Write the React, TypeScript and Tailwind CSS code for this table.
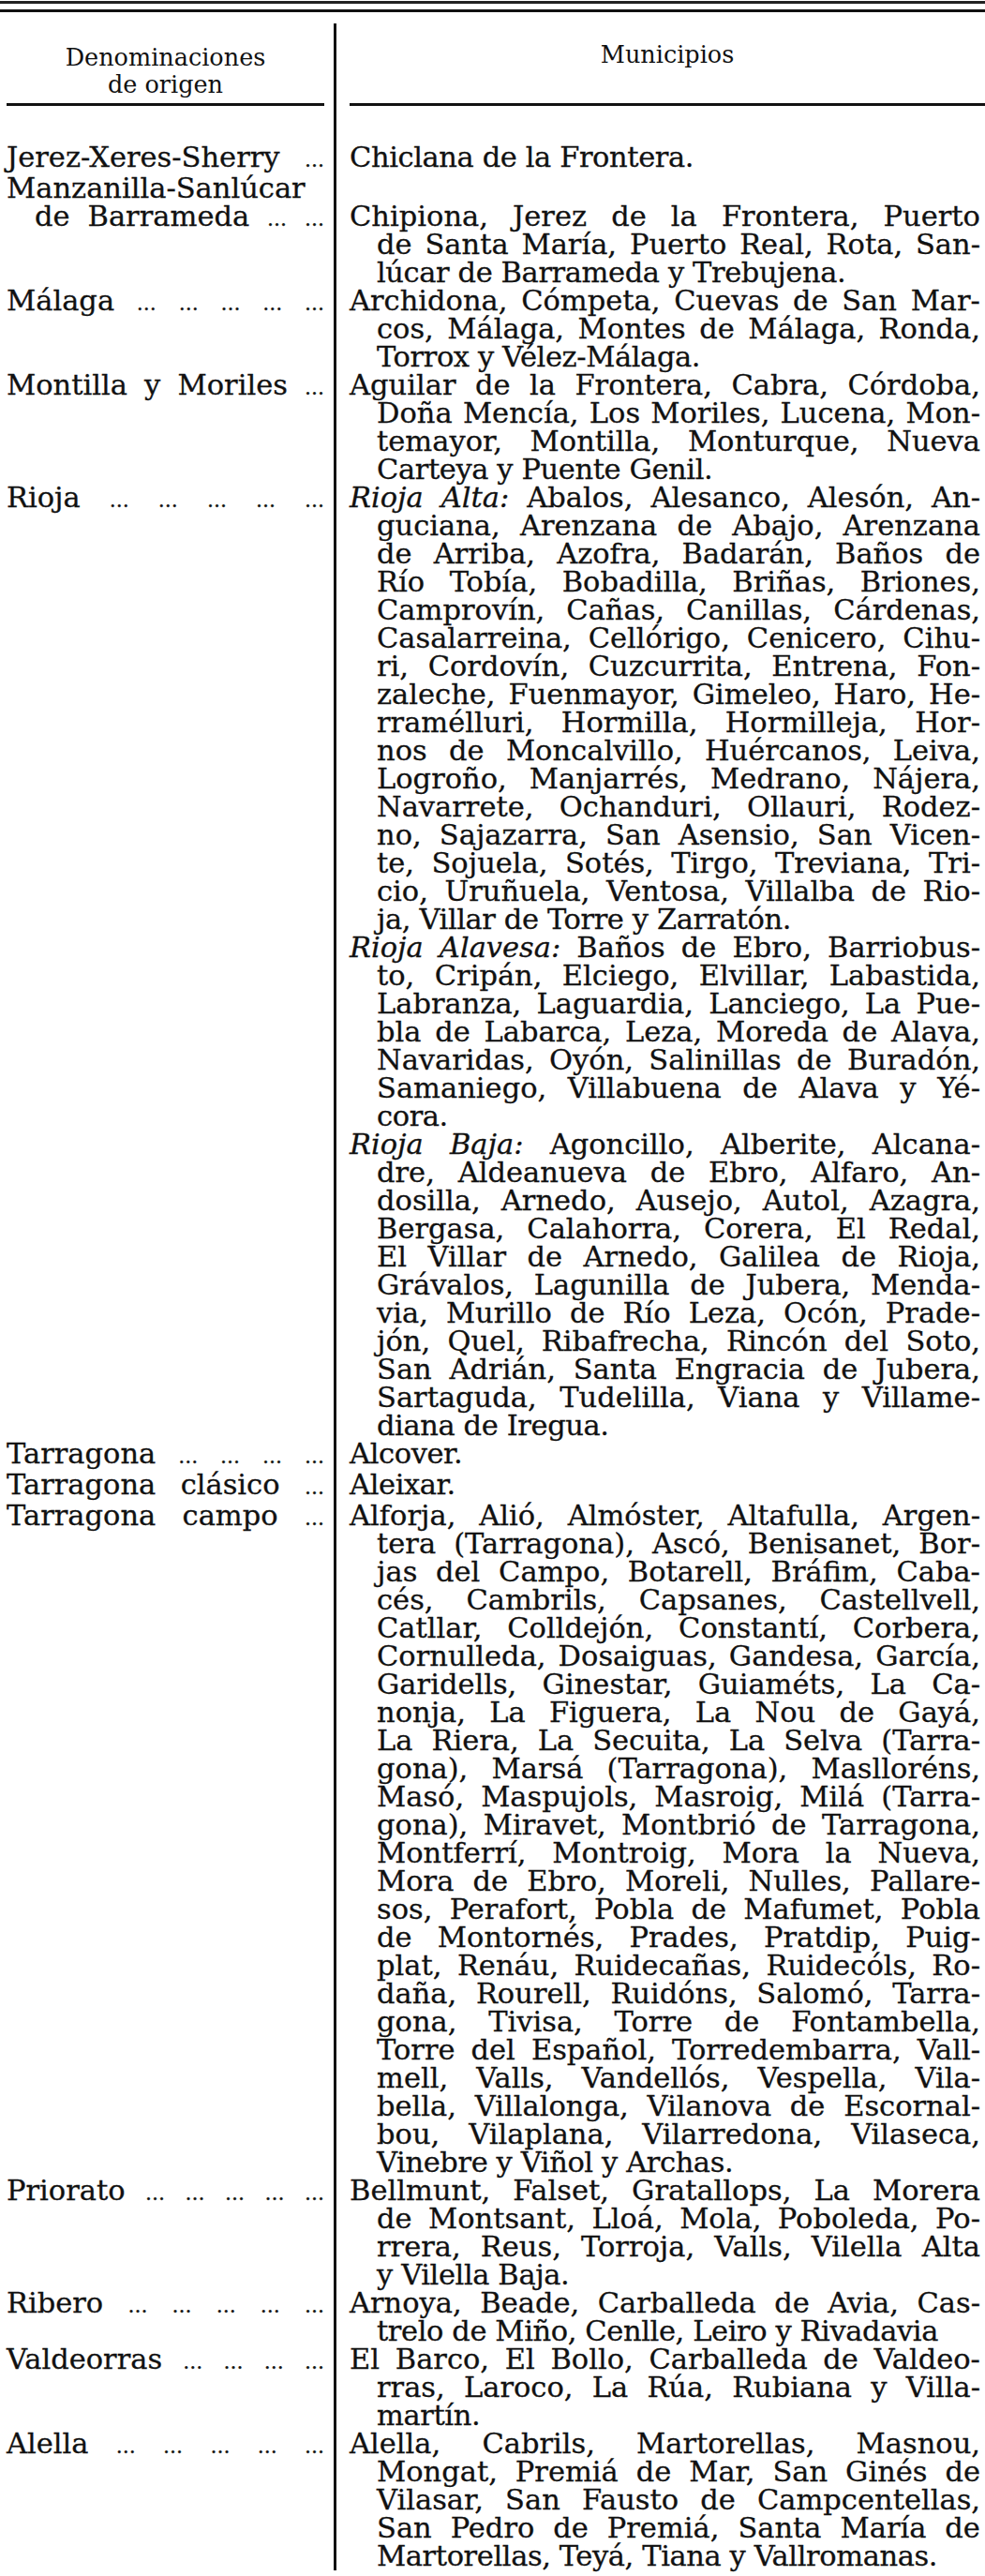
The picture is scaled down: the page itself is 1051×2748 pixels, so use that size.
type Label = { text: string; indent?: boolean }
type Entry = { label: Label[]; skip?: number; paras: string[][] }

const entries: Entry[] = [
  {
    label: [{ text: 'Jerez-Xeres-Sherry ...' }],
    paras: [['Chiclana de la Frontera.']],
  },
  {
    label: [{ text: 'Manzanilla-Sanlúcar' }, { text: 'de Barrameda ... ...', indent: true }],
    skip: 1,
    paras: [
      [
        'Chipiona, Jerez de la Frontera, Puerto',
        'de Santa María, Puerto Real, Rota, San-',
        'lúcar de Barrameda y Trebujena.',
      ],
    ],
  },
  {
    label: [{ text: 'Málaga ... ... ... ... ...' }],
    paras: [
      [
        'Archidona, Cómpeta, Cuevas de San Mar-',
        'cos, Málaga, Montes de Málaga, Ronda,',
        'Torrox y Vélez-Málaga.',
      ],
    ],
  },
  {
    label: [{ text: 'Montilla y Moriles ...' }],
    paras: [
      [
        'Aguilar de la Frontera, Cabra, Córdoba,',
        'Doña Mencía, Los Moriles, Lucena, Mon-',
        'temayor, Montilla, Monturque, Nueva',
        'Carteya y Puente Genil.',
      ],
    ],
  },
  {
    label: [{ text: 'Rioja ... ... ... ... ...' }],
    paras: [
      [
        '_Rioja_ _Alta:_ Abalos, Alesanco, Alesón, An-',
        'guciana, Arenzana de Abajo, Arenzana',
        'de Arriba, Azofra, Badarán, Baños de',
        'Río Tobía, Bobadilla, Briñas, Briones,',
        'Camprovín, Cañas, Canillas, Cárdenas,',
        'Casalarreina, Cellórigo, Cenicero, Cihu-',
        'ri, Cordovín, Cuzcurrita, Entrena, Fon-',
        'zaleche, Fuenmayor, Gimeleo, Haro, He-',
        'rramélluri, Hormilla, Hormilleja, Hor-',
        'nos de Moncalvillo, Huércanos, Leiva,',
        'Logroño, Manjarrés, Medrano, Nájera,',
        'Navarrete, Ochanduri, Ollauri, Rodez-',
        'no, Sajazarra, San Asensio, San Vicen-',
        'te, Sojuela, Sotés, Tirgo, Treviana, Tri-',
        'cio, Uruñuela, Ventosa, Villalba de Rio-',
        'ja, Villar de Torre y Zarratón.',
      ],
      [
        '_Rioja_ _Alavesa:_ Baños de Ebro, Barriobus-',
        'to, Cripán, Elciego, Elvillar, Labastida,',
        'Labranza, Laguardia, Lanciego, La Pue-',
        'bla de Labarca, Leza, Moreda de Alava,',
        'Navaridas, Oyón, Salinillas de Buradón,',
        'Samaniego, Villabuena de Alava y Yé-',
        'cora.',
      ],
      [
        '_Rioja_ _Baja:_ Agoncillo, Alberite, Alcana-',
        'dre, Aldeanueva de Ebro, Alfaro, An-',
        'dosilla, Arnedo, Ausejo, Autol, Azagra,',
        'Bergasa, Calahorra, Corera, El Redal,',
        'El Villar de Arnedo, Galilea de Rioja,',
        'Grávalos, Lagunilla de Jubera, Menda-',
        'via, Murillo de Río Leza, Ocón, Prade-',
        'jón, Quel, Ribafrecha, Rincón del Soto,',
        'San Adrián, Santa Engracia de Jubera,',
        'Sartaguda, Tudelilla, Viana y Villame-',
        'diana de Iregua.',
      ],
    ],
  },
  {
    label: [{ text: 'Tarragona ... ... ... ...' }],
    paras: [['Alcover.']],
  },
  {
    label: [{ text: 'Tarragona clásico ...' }],
    paras: [['Aleixar.']],
  },
  {
    label: [{ text: 'Tarragona campo ...' }],
    paras: [
      [
        'Alforja, Alió, Almóster, Altafulla, Argen-',
        'tera (Tarragona), Ascó, Benisanet, Bor-',
        'jas del Campo, Botarell, Bráfim, Caba-',
        'cés, Cambrils, Capsanes, Castellvell,',
        'Catllar, Colldejón, Constantí, Corbera,',
        'Cornulleda, Dosaiguas, Gandesa, García,',
        'Garidells, Ginestar, Guiaméts, La Ca-',
        'nonja, La Figuera, La Nou de Gayá,',
        'La Riera, La Secuita, La Selva (Tarra-',
        'gona), Marsá (Tarragona), Maslloréns,',
        'Masó, Maspujols, Masroig, Milá (Tarra-',
        'gona), Miravet, Montbrió de Tarragona,',
        'Montferrí, Montroig, Mora la Nueva,',
        'Mora de Ebro, Moreli, Nulles, Pallare-',
        'sos, Perafort, Pobla de Mafumet, Pobla',
        'de Montornés, Prades, Pratdip, Puig-',
        'plat, Renáu, Ruidecañas, Ruidecóls, Ro-',
        'daña, Rourell, Ruidóns, Salomó, Tarra-',
        'gona, Tivisa, Torre de Fontambella,',
        'Torre del Español, Torredembarra, Vall-',
        'mell, Valls, Vandellós, Vespella, Vila-',
        'bella, Villalonga, Vilanova de Escornal-',
        'bou, Vilaplana, Vilarredona, Vilaseca,',
        'Vinebre y Viñol y Archas.',
      ],
    ],
  },
  {
    label: [{ text: 'Priorato ... ... ... ... ...' }],
    paras: [
      [
        'Bellmunt, Falset, Gratallops, La Morera',
        'de Montsant, Lloá, Mola, Poboleda, Po-',
        'rrera, Reus, Torroja, Valls, Vilella Alta',
        'y Vilella Baja.',
      ],
    ],
  },
  {
    label: [{ text: 'Ribero ... ... ... ... ...' }],
    paras: [['Arnoya, Beade, Carballeda de Avia, Cas-', 'trelo de Miño, Cenlle, Leiro y Rivadavia']],
  },
  {
    label: [{ text: 'Valdeorras ... ... ... ...' }],
    paras: [
      ['El Barco, El Bollo, Carballeda de Valdeo-', 'rras, Laroco, La Rúa, Rubiana y Villa-', 'martín.'],
    ],
  },
  {
    label: [{ text: 'Alella ... ... ... ... ...' }],
    paras: [
      [
        'Alella, Cabrils, Martorellas, Masnou,',
        'Mongat, Premiá de Mar, San Ginés de',
        'Vilasar, San Fausto de Campcentellas,',
        'San Pedro de Premiá, Santa María de',
        'Martorellas, Teyá, Tiana y Vallromanas.',
      ],
    ],
  },
]

// one word of a justified line; _word_ is italic, dot leaders are set smaller
function Word({ w }: { w: string }) {
  if (w.startsWith('_')) return <span className="italic">{w.replace(/_/g, '')}</span>
  if (/^\.+$/.test(w)) return <span className="text-[22px]">{w}</span>
  return <span>{w}</span>
}

function JustLine({ text, className }: { text: string; className: string }) {
  return (
    <div className={`flex items-baseline justify-between whitespace-nowrap ${className}`}>
      {text.split(' ').map((w, i) => (
        <Word key={i} w={w} />
      ))}
    </div>
  )
}

function Paragraph({ lines }: { lines: string[] }) {
  return (
    <div>
      {lines.map((l, i) => {
        const pad = i === 0 ? '' : 'pl-[29px]'
        if (i < lines.length - 1) return <JustLine key={i} text={l} className={pad} />
        return (
          <div key={i} className={`whitespace-nowrap tracking-[-0.4px] ${pad}`}>
            {l}
          </div>
        )
      })}
    </div>
  )
}

function Row({ entry }: { entry: Entry }) {
  return (
    <div className="grid grid-cols-[356px_1fr]">
      <div className="pl-[7px] pr-[10px]">
        {entry.label.map((l, i) => (
          <JustLine key={i} text={l.text} className={l.indent ? 'pl-[30px]' : ''} />
        ))}
      </div>
      <div className={`border-l-[3px] border-[#111] pl-[14px] pr-[5px] ${entry.skip ? 'pt-[30px]' : ''}`}>
        {entry.paras.map((p, i) => (
          <Paragraph key={i} lines={p} />
        ))}
      </div>
    </div>
  )
}

export default function App() {
  return (
    <div className="min-h-[2748px] w-[1051px] bg-white font-['DejaVu_Serif',serif] text-[#111]">
      <div className="mt-[1px] h-[3px] bg-[#222]" />
      <div className="mt-[6px] h-[3px] bg-[#111]" />

      <div className="mt-[12px] grid grid-cols-[356px_1fr]">
        <div className="pl-[7px] pr-[10px] pt-[22px]">
          <div className="text-center text-[25.5px] leading-[29px]">
            <div>Denominaciones</div>
            <div>de origen</div>
          </div>
          <div className="mt-[5px] h-[3px] bg-[#111]" />
        </div>
        <div className="border-l-[3px] border-[#111] pl-[14px] pt-[19px]">
          <div className="text-center text-[25.5px] leading-[29px]">Municipios</div>
          <div className="mt-[37px] h-[3px] bg-[#111]" />
        </div>
      </div>

      <div className="grid grid-cols-[356px_1fr]">
        <div className="h-[40px]" />
        <div className="h-[40px] border-l-[3px] border-[#111]" />
      </div>

      <div className="text-[30.5px] leading-[30px] [-webkit-text-stroke:0.3px_#111]">
        {entries.map((e, i) => (
          <Row key={i} entry={e} />
        ))}
      </div>
    </div>
  )
}
